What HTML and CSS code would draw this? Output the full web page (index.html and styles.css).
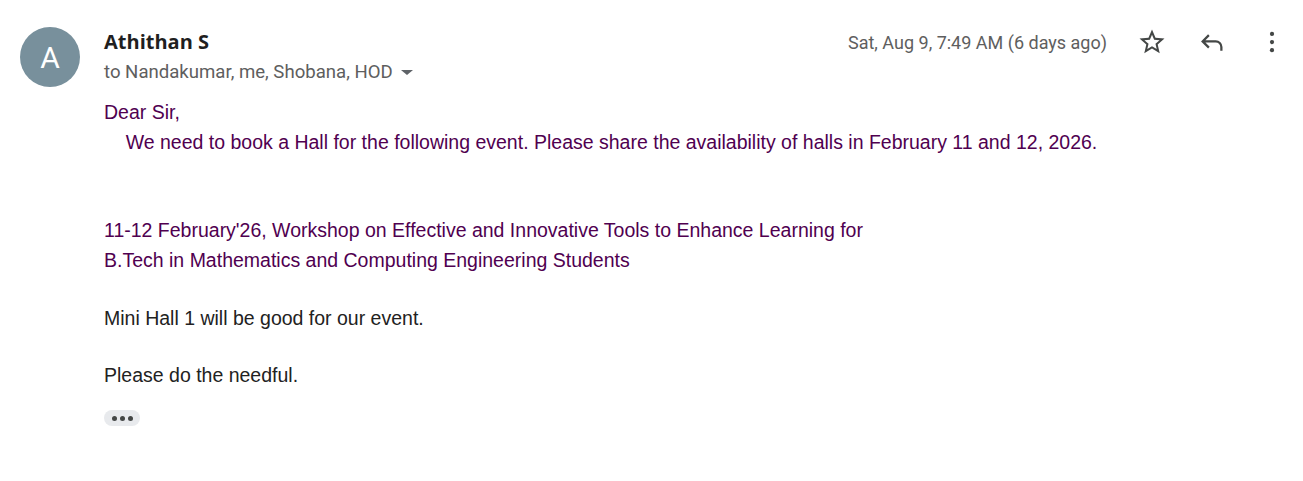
FILE: index.html
```html
<!DOCTYPE html>
<html>
<head>
<meta charset="utf-8">
<link rel="stylesheet" href="styles.css">
</head>
<body>
<div class="msg">
  <div class="avatar">A</div>
  <div class="main">
    <div class="head">
      <div class="who">
        <div class="name">Athithan S</div>
        <div class="to">to Nandakumar, me, Shobana, HOD <svg class="caret" width="20" height="20" viewBox="0 0 20 20"><path d="M4 8l6 5 6-5z" fill="#5f6368"/></svg></div>
      </div>
      <div class="meta">
        <span class="date">Sat, Aug 9, 7:49 AM (6 days ago)</span>
        <span class="icon"><svg width="30" height="30" viewBox="0 0 24 24"><path fill="#444746" d="M22 9.24l-7.19-.62L12 2 9.19 8.63 2 9.24l5.46 4.73L5.82 21 12 17.27 18.18 21l-1.63-7.03L22 9.24zM12 15.4l-3.76 2.27 1-4.28-3.32-2.88 4.38-.38L12 6.1l1.71 4.04 4.38.38-3.32 2.88 1 4.28L12 15.4z"/></svg></span>
        <span class="icon"><svg width="30" height="30" viewBox="0 0 24 24"><path fill="none" stroke="#444746" stroke-width="1.8" d="M9.5 6.5L4.5 11.5l5 5M4.8 11.5H15a4.5 4.5 0 0 1 4.5 4.5v3"/></svg></span>
        <span class="icon"><svg width="30" height="30" viewBox="0 0 24 24"><circle cx="12" cy="5.5" r="1.7" fill="#444746"/><circle cx="12" cy="12" r="1.7" fill="#444746"/><circle cx="12" cy="18.5" r="1.7" fill="#444746"/></svg></span>
      </div>
    </div>
    <div class="body">
      <div class="quoted">
        <div>Dear Sir,</div>
        <div>&nbsp; &nbsp; We need to book a Hall for the following event. Please share the availability of halls in February 11 and 12, 2026.</div>
        <div><br></div>
        <div><br></div>
        <div>11-12 February'26, Workshop on Effective and Innovative Tools to Enhance Learning for</div>
        <div>B.Tech in Mathematics and Computing Engineering Students</div>
      </div>
      <div class="plain">
        <div><br></div>
        <div>Mini Hall 1 will be good for our event.</div>
        <div><br></div>
        <div>Please do the needful.</div>
      </div>
      <div class="more"><span></span><span></span><span></span></div>
    </div>
  </div>
</div>
</body>
</html>
```
FILE: styles.css
```css
html, body {
  margin: 0;
  padding: 0;
  background: #ffffff;
}
.msg {
  display: flex;
  padding: 27px 16px 0 20px;
}
.avatar {
  width: 60px;
  height: 60px;
  border-radius: 50%;
  background: #78909c;
  color: #ffffff;
  font-family: Roboto, "Liberation Sans", sans-serif;
  font-size: 30px;
  display: flex;
  align-items: center;
  justify-content: center;
  flex: none;
  margin-right: 24px;
}
.main {
  flex: 1;
}
.head {
  display: flex;
  align-items: flex-start;
}
.who {
  flex: 1;
}
.name {
  font-family: "Open Sans", Roboto, sans-serif;
  font-weight: 700;
  font-size: 20px;
  color: #1f1f1f;
  line-height: 30px;
}
.to {
  font-family: Roboto, "Open Sans", sans-serif;
  font-size: 18.6px;
  color: #5e5e5e;
  line-height: 30px;
  display: flex;
  align-items: center;
}
.caret {
  margin-left: 4px;
}
.meta {
  display: flex;
  align-items: center;
  height: 30px;
}
.date {
  font-family: Roboto, "Open Sans", sans-serif;
  font-size: 18px;
  color: #5e5e5e;
  margin-right: 30px;
}
.icon {
  width: 30px;
  height: 30px;
  display: flex;
  margin-left: 30px;
}
.date + .icon {
  margin-left: 0;
}
.body {
  font-family: "Liberation Sans", Arial, sans-serif;
  font-size: 19.5px;
  line-height: 29.5px;
  color: #222222;
  margin-top: 11px;
}
.quoted {
  color: #500050;
}
.plain {
  line-height: 28.5px;
}
.more {
  display: inline-flex;
  align-items: center;
  justify-content: center;
  gap: 3px;
  width: 36px;
  height: 16px;
  background: #e8eaed;
  border-radius: 8px;
  margin-top: 21px;
}
.more span {
  width: 5px;
  height: 5px;
  border-radius: 50%;
  background: #444746;
}
```
